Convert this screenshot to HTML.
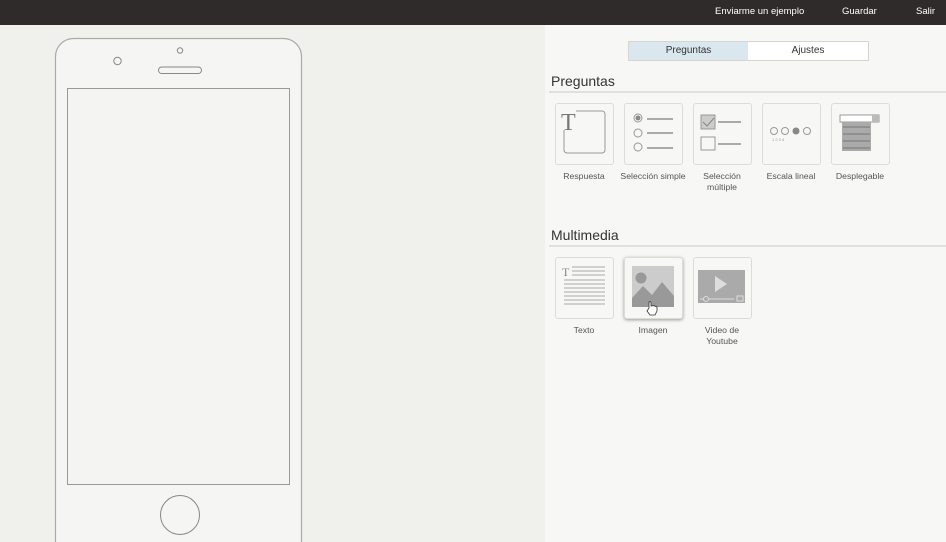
<!DOCTYPE html><html><head><meta charset="utf-8"><style>
body{margin:0;width:946px;height:542px;overflow:hidden;background:#f0f0ec;font-family:"Liberation Sans",sans-serif;position:relative}
.top{position:absolute;left:0;top:0;width:946px;height:25px;background:#2f2b2a;color:#fff;font-size:9.5px}
.top span{position:absolute;top:6px}
.right{position:absolute;left:545px;top:25px;width:401px;height:517px;background:#f7f7f5}
.tabs{position:absolute;left:628px;top:41px;width:239px;height:18px;border:1px solid #d6d6d0;font-size:10px;color:#333}
.tabs div{position:absolute;top:0;height:18px;line-height:18px;text-align:center}
h2{position:absolute;margin:0;font-weight:normal;font-size:14px;color:#333;left:551px}
.hr{position:absolute;left:549px;width:397px;height:2px;background:#e0e0dc}
.tile{position:absolute;width:57px;height:60px;border:1px solid #dcdcd8;border-radius:3px;background:#f7f7f5}
.lbl{position:absolute;width:80px;text-align:center;font-size:8.7px;color:#555;line-height:11px}
</style></head><body>
<div class="top"><span style="left:715px">Enviarme un ejemplo</span><span style="left:842px">Guardar</span><span style="left:916px">Salir</span></div>
<svg style="position:absolute;left:0;top:0;overflow:hidden" width="540" height="542">
<rect x="55.5" y="38.5" width="246" height="540" rx="18" fill="#f5f5f3" stroke="#aaa" stroke-width="1.2"/>
<rect x="67.5" y="88.5" width="222" height="396" fill="#f4f4f2" stroke="#999"/>
<circle cx="117.5" cy="61" r="3.7" fill="none" stroke="#888"/>
<circle cx="180" cy="50.5" r="2.7" fill="none" stroke="#888"/>
<rect x="158.5" y="67" width="43" height="6.5" rx="3.2" fill="none" stroke="#888"/>
<circle cx="180" cy="515" r="19.5" fill="none" stroke="#888"/>
</svg>
<div class="right"></div>
<div class="tabs"><div style="left:0;width:119px;background:#dbe7ef">Preguntas</div><div style="left:119px;width:120px;background:#fff">Ajustes</div></div>
<h2 style="top:73px">Preguntas</h2><div class="hr" style="top:91px"></div>
<h2 style="top:227px">Multimedia</h2><div class="hr" style="top:245px"></div>
<div class="tile" style="left:555px;top:103px"></div>
<div class="tile" style="left:624px;top:103px"></div>
<div class="tile" style="left:693px;top:103px"></div>
<div class="tile" style="left:762px;top:103px"></div>
<div class="tile" style="left:831px;top:103px"></div>
<div class="tile" style="left:555px;top:257px"></div>
<div class="tile" style="left:624px;top:257px;box-shadow:0 1px 3px #999"></div>
<div class="tile" style="left:693px;top:257px"></div>
<svg style="position:absolute;left:0;top:0" width="946" height="542">
<rect x="564" y="111" width="41" height="42" rx="3" fill="none" stroke="#999"/>
<rect x="560" y="108" width="16" height="22" fill="#f7f7f5"/>
<text x="561" y="130" font-family="Liberation Serif" font-size="24" fill="#777">T</text>
<g fill="none" stroke="#999"><circle cx="638" cy="118" r="4"/><circle cx="638" cy="133" r="4"/><circle cx="638" cy="147" r="4"/></g>
<circle cx="638" cy="118" r="2.5" fill="#888"/>
<g stroke="#aaa" stroke-width="2"><line x1="647" y1="119" x2="673" y2="119"/><line x1="647" y1="133" x2="673" y2="133"/><line x1="647" y1="148" x2="673" y2="148"/></g>
<rect x="701" y="115" width="14" height="14" fill="#ccc" stroke="#999"/><path d="M703 122 l4 4 l7 -8" fill="none" stroke="#888"/>
<rect x="701" y="137" width="14" height="13" fill="none" stroke="#999"/>
<g stroke="#aaa" stroke-width="2"><line x1="718" y1="122" x2="741" y2="122"/><line x1="718" y1="144" x2="741" y2="144"/></g>
<g fill="none" stroke="#999"><circle cx="774" cy="131" r="3.5"/><circle cx="785" cy="131" r="3.5"/><circle cx="807" cy="131" r="3.5"/></g><circle cx="796" cy="131" r="3.5" fill="#888"/>
<text x="772" y="141" font-size="4" fill="#999">1    2    3    4</text>
<rect x="840" y="115" width="39" height="7" fill="#fff" stroke="#999"/><rect x="872" y="115" width="7" height="7" fill="#bbb"/>
<rect x="842" y="122" width="29" height="29" fill="#aaa"/>
<g stroke="#888" stroke-width="1.5"><line x1="843" y1="127" x2="870" y2="127"/><line x1="843" y1="134" x2="870" y2="134"/><line x1="843" y1="141" x2="870" y2="141"/><line x1="843" y1="148" x2="870" y2="148"/></g>
<text x="562" y="276" font-family="Liberation Serif" font-size="12" fill="#888">T</text>
<g stroke="#aaa"><line x1="572" y1="267" x2="605" y2="267"/><line x1="572" y1="271" x2="605" y2="271"/><line x1="572" y1="275" x2="605" y2="275"/><line x1="564" y1="280" x2="605" y2="280"/><line x1="564" y1="284" x2="605" y2="284"/><line x1="564" y1="288" x2="605" y2="288"/><line x1="564" y1="292" x2="605" y2="292"/><line x1="564" y1="296" x2="605" y2="296"/><line x1="564" y1="300" x2="605" y2="300"/><line x1="564" y1="304" x2="605" y2="304"/></g>
<rect x="632" y="266" width="42" height="41" fill="#ccc"/>
<circle cx="641" cy="278" r="5.5" fill="#999"/>
<path d="M632 307 L632 298 L643 286 L652 295 L662 282 L674 296 L674 307 Z" fill="#999"/>
<path d="M649 308 l0 -6 q2-1 2 1 l0 3 q3 -1 6 1 l0 4 l-2 4 l-5 0 l-3 -4 z" fill="#fff" stroke="#333" stroke-width="0.8"/>
<rect x="698" y="270" width="47" height="33" fill="#aaa"/>
<path d="M715 276 l12 8 l-12 8 z" fill="#ddd"/>
<line x1="700" y1="299" x2="734" y2="299" stroke="#ddd"/><circle cx="706" cy="299" r="2.5" fill="#aaa" stroke="#ddd"/>
<rect x="737" y="296" width="6" height="5" fill="none" stroke="#ddd"/>
</svg>
<div class="lbl" style="left:544px;top:171px">Respuesta</div>
<div class="lbl" style="left:613px;top:171px">Selección simple</div>
<div class="lbl" style="left:682px;top:171px">Selección<br>múltiple</div>
<div class="lbl" style="left:751px;top:171px">Escala lineal</div>
<div class="lbl" style="left:820px;top:171px">Desplegable</div>
<div class="lbl" style="left:544px;top:325px">Texto</div>
<div class="lbl" style="left:613px;top:325px">Imagen</div>
<div class="lbl" style="left:682px;top:325px">Video de<br>Youtube</div>
</body></html>
